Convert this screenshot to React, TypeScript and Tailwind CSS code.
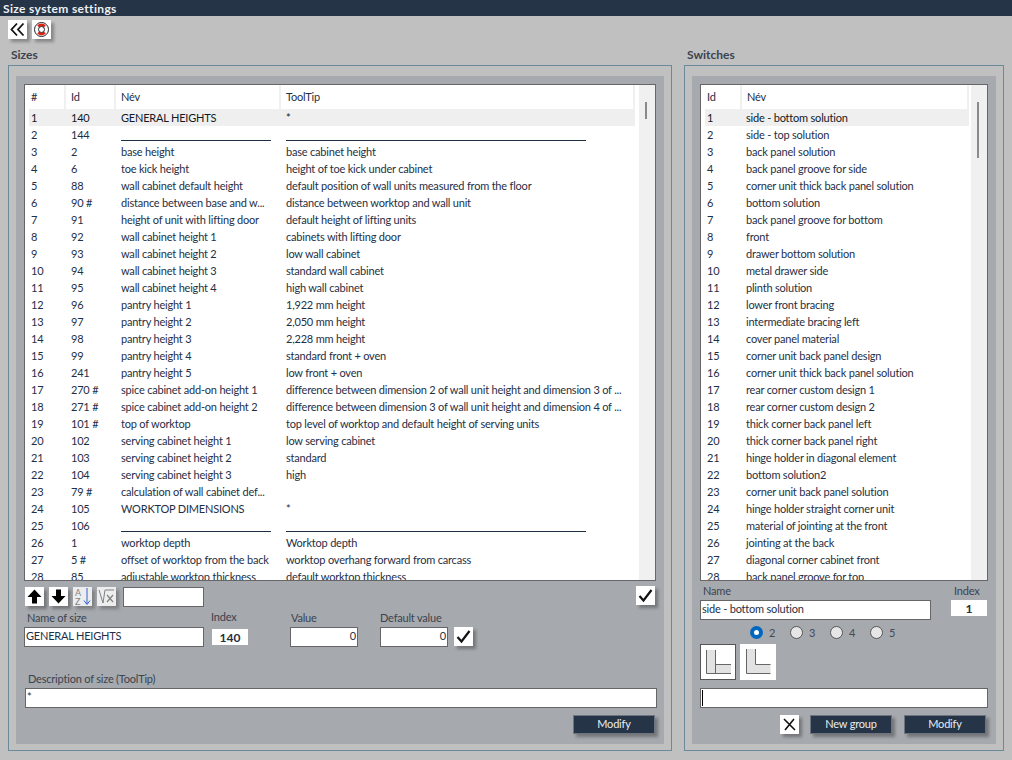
const font = "font-['Lato',sans-serif]";

const sizes: [string, string, string, string][] = [
  ["1", "140", "GENERAL HEIGHTS", "*"],
  ["2", "144", "-", "-"],
  ["3", "2", "base height", "base cabinet height"],
  ["4", "6", "toe kick height", "height of toe kick under cabinet"],
  ["5", "88", "wall cabinet default height", "default position of wall units measured from the floor"],
  ["6", "90 #", "distance between base and w...", "distance between worktop and wall unit"],
  ["7", "91", "height of unit with lifting door", "default height of lifting units"],
  ["8", "92", "wall cabinet height 1", "cabinets with lifting door"],
  ["9", "93", "wall cabinet height 2", "low wall cabinet"],
  ["10", "94", "wall cabinet height 3", "standard wall cabinet"],
  ["11", "95", "wall cabinet height 4", "high wall cabinet"],
  ["12", "96", "pantry height 1", "1,922 mm height"],
  ["13", "97", "pantry height 2", "2,050 mm height"],
  ["14", "98", "pantry height 3", "2,228 mm height"],
  ["15", "99", "pantry height 4", "standard front + oven"],
  ["16", "241", "pantry height 5", "low front + oven"],
  ["17", "270 #", "spice cabinet add-on height 1", "difference between dimension 2 of wall unit height and dimension 3 of ..."],
  ["18", "271 #", "spice cabinet add-on height 2", "difference between dimension 3 of wall unit height and dimension 4 of ..."],
  ["19", "101 #", "top of worktop", "top level of worktop and default height of serving units"],
  ["20", "102", "serving cabinet height 1", "low serving cabinet"],
  ["21", "103", "serving cabinet height 2", "standard"],
  ["22", "104", "serving cabinet height 3", "high"],
  ["23", "79 #", "calculation of wall cabinet def...", ""],
  ["24", "105", "WORKTOP DIMENSIONS", "*"],
  ["25", "106", "-", "-"],
  ["26", "1", "worktop depth", "Worktop depth"],
  ["27", "5 #", "offset of worktop from the back", "worktop overhang forward from carcass"],
  ["28", "85", "adjustable worktop thickness", "default worktop thickness"],
];

const switches = [
  "side - bottom solution", "side - top solution", "back panel solution", "back panel groove for side",
  "corner unit thick back panel solution", "bottom solution", "back panel groove for bottom", "front",
  "drawer bottom solution", "metal drawer side", "plinth solution", "lower front bracing",
  "intermediate bracing left", "cover panel material", "corner unit back panel design",
  "corner unit thick back panel solution", "rear corner custom design 1", "rear corner custom design 2",
  "thick corner back panel left", "thick corner back panel right", "hinge holder in diagonal element",
  "bottom solution2", "corner unit back panel solution", "hinge holder straight corner unit",
  "material of jointing at the front", "jointing at the back", "diagonal corner cabinet front", "back panel groove for top",
];

function Cell({ w, text, line }: { w: string; text: string; line?: string }) {
  return (
    <div className={`${w} shrink-0 pl-[2px] leading-[18px] whitespace-nowrap`}>
      {text === "-" ? <div className={`${line} mt-[14px] h-px bg-[#1f2f45]`} /> : text}
    </div>
  );
}

function IconBtn({ children, faded }: { children: React.ReactNode; faded?: boolean }) {
  return (
    <button className={`flex h-[19px] w-[19px] shrink-0 items-center justify-center bg-white shadow-[3px_3px_3px_rgba(0,0,0,0.3)] ${faded ? "opacity-80" : ""}`}>
      {children}
    </button>
  );
}

function Check() {
  return (
    <svg width="15" height="15" viewBox="0 0 15 15">
      <path d="M1.5 8 L5.5 12.5 L13.5 2" fill="none" stroke="#111" strokeWidth="2.2" />
    </svg>
  );
}

function DarkBtn({ label }: { label: string }) {
  return (
    <button className="flex h-[19px] w-[82px] shrink-0 items-center justify-center border border-[#6d7480] bg-[#253446] pb-[2px] text-[#e8edf2] shadow-[3px_3px_3px_rgba(0,0,0,0.3)]">
      {label}
    </button>
  );
}

function Input({ w, value, right }: { w: string; value?: string; right?: boolean }) {
  return (
    <div className={`${w} h-[20px] shrink-0 border border-[#666] bg-white px-[1px] leading-[16px] whitespace-nowrap ${right ? "text-right" : ""}`}>
      {value}
    </div>
  );
}

function Radio({ label, on }: { label: string; on?: boolean }) {
  return (
    <div className="flex w-[40px] shrink-0 items-center gap-[6px] text-[#444b55]">
      {on ? (
        <div className="flex h-[13px] w-[13px] items-center justify-center rounded-full bg-[#0067c0]">
          <div className="h-[5px] w-[5px] rounded-full bg-white" />
        </div>
      ) : (
        <div className="h-[13px] w-[13px] rounded-full border border-[#555] bg-[#e6e6e6]" />
      )}
      {label}
    </div>
  );
}

export default function App() {
  return (
    <div className={`${font} h-[760px] w-[1012px] overflow-hidden bg-[#c0c0c0] text-[11px] leading-[17px] tracking-[-0.2px] text-[#1f2f45]`}>
      <div className="h-[16px] bg-[#253446] pl-[3px] text-[12px] leading-[17px] font-bold tracking-[0.35px] text-[#eef1f4]">Size system settings</div>

      <div className="mt-[4px] flex gap-[5px] pl-[8px]">
        <IconBtn>
          <svg width="15" height="15" viewBox="0 0 15 15">
            <path d="M7 1.5 L1.5 7.5 L7 13.5 M13.5 1.5 L8 7.5 L13.5 13.5" fill="none" stroke="#111" strokeWidth="1.8" />
          </svg>
        </IconBtn>
        <IconBtn>
          <svg width="15" height="15" viewBox="0 0 15 15">
            <circle cx="7.5" cy="7.5" r="7" fill="#fff" stroke="#222" strokeWidth="1" />
            <path d="M3.2 3.4 A6 6 0 0 1 11.8 3.4 L9.8 5.4 A3 3 0 0 0 5.2 5.4 Z" fill="#e02010" />
            <path d="M3.2 11.6 A6 6 0 0 0 11.8 11.6 L9.8 9.6 A3 3 0 0 1 5.2 9.6 Z" fill="#e02010" />
            <circle cx="7.5" cy="7.5" r="3" fill="#fff" stroke="#222" strokeWidth="1" />
          </svg>
        </IconBtn>
      </div>

      <div className="mt-[8px] flex pl-[8px]">
        {/* Sizes */}
        <div className="w-[664px] shrink-0">
          <div className="h-[18px] pl-[3px] text-[12px] leading-[15px] font-bold tracking-normal text-[#3b4350]">Sizes</div>
          <div className="h-[686px] border border-[#6a8a9a] pt-[10px] pr-[7px] pb-[6px] pl-[7px]">
            <div className="h-full bg-[#a6a9ad] px-[8px] pt-[8px]">
              <div className="flex h-[497px] w-[632px] overflow-hidden border border-[#666] bg-white">
                <div className="w-[610px] shrink-0">
                  <div className="flex h-[24px] items-center">
                    <div className="h-full w-[41px] border-r-2 border-[#f0f0f0] pl-[6px] leading-[24px]">#</div>
                    <div className="h-full w-[50px] border-r-2 border-[#f0f0f0] pl-[5px] leading-[24px]">Id</div>
                    <div className="h-full w-[165px] border-r-2 border-[#f0f0f0] pl-[5px] leading-[24px]">Név</div>
                    <div className="h-full w-[354px] border-r-2 border-[#f0f0f0] pl-[5px] leading-[24px]">ToolTip</div>
                  </div>
                  {sizes.map((r, i) => (
                    <div key={r[0]} className={`ml-[4px] flex h-[17px] w-[606px] ${i === 0 ? "bg-[#efefef] text-[#101a28]" : ""}`}>
                      <Cell w="w-[40px]" text={r[0]} />
                      <Cell w="w-[50px]" text={r[1]} />
                      <Cell w="w-[165px]" text={r[2]} line="w-[150px]" />
                      <Cell w="w-[351px]" text={r[3]} line="w-[300px]" />
                    </div>
                  ))}
                </div>
                <div className="ml-[4px] w-[16px] bg-[#f0f0f0] pt-[17px] pl-[6px]">
                  <div className="h-[17px] w-[2px] bg-[#8a8a8a]" />
                </div>
              </div>

              <div className="mt-[6px] flex h-[20px] items-start gap-[5px] pl-[1px]">
                <IconBtn>
                  <svg width="17" height="17" viewBox="0 0 17 17"><path d="M8.5 1.5 L15.5 9 L11 9 L11 15.5 L6 15.5 L6 9 L1.5 9 Z" fill="#000" /></svg>
                </IconBtn>
                <IconBtn>
                  <svg width="17" height="17" viewBox="0 0 17 17"><path d="M8.5 15.5 L15.5 8 L11 8 L11 1.5 L6 1.5 L6 8 L1.5 8 Z" fill="#000" /></svg>
                </IconBtn>
                <IconBtn faded>
                  <svg width="19" height="19" viewBox="0 0 19 19">
                    <text x="2" y="9" fontSize="9" fill="#777">A</text>
                    <text x="2" y="18" fontSize="9" fill="#777">Z</text>
                    <path d="M14 1 V17 M11 13.5 L14 17.5 L17 13.5" fill="none" stroke="#1a4fe0" strokeWidth="1" />
                  </svg>
                </IconBtn>
                <IconBtn faded>
                  <svg width="19" height="19" viewBox="0 0 19 19">
                    <path d="M2 3 L6 16 L8 3 L17 3" fill="none" stroke="#777" strokeWidth="1" />
                    <path d="M10 8 L16 15 M16 8 L10 15" stroke="#777" strokeWidth="1.2" />
                  </svg>
                </IconBtn>
                <div className="ml-[2px]"><Input w="w-[81px]" /></div>
                <div className="mt-[-1px] ml-auto mr-[1px]"><IconBtn><Check /></IconBtn></div>
              </div>

              <div className="mt-[4px] flex items-start">
                <div className="w-[180px] shrink-0">
                  <div className="h-[16px] pl-[3px] leading-[13px] text-[#3b4350]">Name of size</div>
                  <Input w="w-[180px]" value="GENERAL HEIGHTS" />
                </div>
                <div className="ml-[7px] w-[79px] shrink-0">
                  <div className="h-[18px] leading-[11px] text-[#3b4350]">Index</div>
                  <div className="ml-[1px] h-[16px] w-[36px] bg-white text-center text-[12px] leading-[17px] font-bold tracking-normal">140</div>
                </div>
                <div className="w-[90px] shrink-0">
                  <div className="h-[16px] pl-[1px] leading-[13px] text-[#3b4350]">Value</div>
                  <Input w="w-[68px]" value="0" right />
                </div>
                <div className="w-[74px] shrink-0">
                  <div className="h-[16px] leading-[13px] text-[#3b4350]">Default value</div>
                  <Input w="w-[68px]" value="0" right />
                </div>
                <div className="mt-[16px]"><IconBtn><Check /></IconBtn></div>
              </div>

              <div className="mt-[24px] h-[17px] pl-[4px] leading-[15px] text-[#3b4350]">Description of size (ToolTip)</div>
              <Input w="ml-[1px] w-[632px]" value="*" />
              <div className="mt-[7px] flex justify-end pr-[1px]"><DarkBtn label="Modify" /></div>
            </div>
          </div>
        </div>

        {/* Switches */}
        <div className="ml-[12px] w-[320px] shrink-0">
          <div className="h-[18px] pl-[3px] text-[12px] leading-[15px] font-bold tracking-normal text-[#3b4350]">Switches</div>
          <div className="h-[686px] border border-[#6a8a9a] pt-[10px] pr-[7px] pb-[6px] pl-[7px]">
            <div className="h-full bg-[#a6a9ad] px-[8px] pt-[8px]">
              <div className="flex h-[497px] w-[288px] overflow-hidden border border-[#666] bg-white">
                <div className="w-[268px] shrink-0">
                  <div className="flex h-[24px]">
                    <div className="h-full w-[41px] border-r-2 border-[#f0f0f0] pl-[6px] leading-[24px]">Id</div>
                    <div className="h-full w-[227px] border-r-2 border-[#f0f0f0] pl-[5px] leading-[24px]">Név</div>
                  </div>
                  {switches.map((s, i) => (
                    <div key={i} className={`ml-[4px] flex h-[17px] w-[264px] ${i === 0 ? "bg-[#efefef] text-[#101a28]" : ""}`}>
                      <Cell w="w-[39px]" text={String(i + 1)} />
                      <Cell w="w-[225px]" text={s} />
                    </div>
                  ))}
                </div>
                <div className="ml-[2px] w-[16px] bg-[#f0f0f0] pt-[17px] pl-[6px]">
                  <div className="h-[56px] w-[2px] bg-[#8a8a8a]" />
                </div>
              </div>

              <div className="flex items-start">
                <div className="w-[231px] shrink-0">
                  <div className="h-[19px] pl-[3px] leading-[20px] text-[#3b4350]">Name</div>
                  <Input w="w-[231px]" value="side - bottom solution" />
                </div>
                <div className="ml-[20px] w-[36px] shrink-0">
                  <div className="h-[19px] pl-[3px] leading-[20px] text-[#3b4350]">Index</div>
                  <div className="h-[16px] bg-white text-center text-[12px] leading-[17px] font-bold tracking-normal">1</div>
                </div>
              </div>

              <div className="mt-[6px] flex h-[13px] pl-[50px] leading-[13px]">
                <Radio label="2" on />
                <Radio label="3" />
                <Radio label="4" />
                <Radio label="5" />
              </div>

              <div className="mt-[5px] flex gap-[4px]">
                <div className="h-[36px] w-[36px] border border-[#555] bg-white">
                  <svg width="34" height="34" viewBox="0 0 34 34">
                    <path d="M5.5 5 H14.5 V19.5 H30 V28.5 H5.5 Z" fill="#e2e2e2" />
                    <path d="M5.5 5 V28.5 H30 M14.5 5 V28.5 M14.5 19.5 H30" fill="none" stroke="#666" />
                  </svg>
                </div>
                <div className="h-[36px] w-[36px] bg-white p-px">
                  <svg width="34" height="34" viewBox="0 0 34 34">
                    <path d="M5.5 4 H14.5 V19.5 H29.5 V28.5 H5.5 Z" fill="#e2e2e2" />
                    <path d="M5.5 4 V28.5 H29.5 M14.5 4 V19.5 H29.5" fill="none" stroke="#666" />
                  </svg>
                </div>
              </div>

              <div className="mt-[8px] h-[20px] w-[288px] border border-[#666] bg-white pl-[1px] pt-[1px]">
                <div className="h-[16px] w-px bg-black" />
              </div>

              <div className="mt-[7px] flex items-start pl-[80px]">
                <IconBtn>
                  <svg width="15" height="15" viewBox="0 0 15 15">
                    <path d="M2 2 L13 13 M12 2 L3 13" stroke="#111" strokeWidth="1.6" />
                  </svg>
                </IconBtn>
                <div className="ml-[11px]"><DarkBtn label="New group" /></div>
                <div className="ml-[12px]"><DarkBtn label="Modify" /></div>
              </div>
            </div>
          </div>
        </div>
      </div>
    </div>
  );
}
